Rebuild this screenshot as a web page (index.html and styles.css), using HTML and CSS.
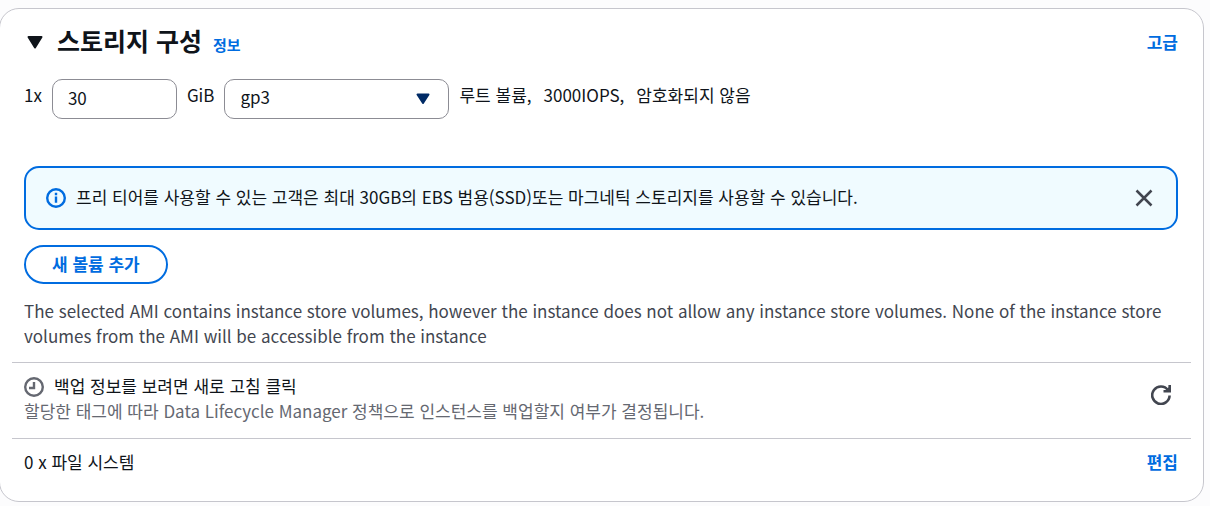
FILE: index.html
```html
<!DOCTYPE html>
<html lang="ko">

<head>
    <meta charset="UTF-8">
    <meta name="viewport" content="width=device-width, initial-scale=1.0">
    <title>스토리지 구성</title>
    <link rel="stylesheet" href="styles.css">
</head>

<body>
    <section class="card">
        <div class="header">
            <button class="toggle" type="button" aria-label="접기">
                <svg width="18" height="16" viewBox="0 0 18 16"><path d="M2.5 4h13L9 14.5z" fill="#0f141a" stroke="#0f141a" stroke-width="2" stroke-linejoin="round"/></svg>
            </button>
            <div class="title">
                <h2>스토리지 구성</h2>
                <a class="info" href="#">정보</a>
            </div>
            <a class="link" href="#">고급</a>
        </div>

        <!-- Root volume -->
        <div class="volume">
            <label for="size">1x</label>
            <input class="field size" id="size" type="text" value="30">
            <label for="type">GiB</label>
            <div class="selectWrap">
                <select class="field" id="type">
                    <option>gp3</option>
                </select>
                <svg class="caret" width="14" height="12" viewBox="0 0 14 12"><path d="M1.5 1.5h11L7 10z" fill="#002b66" stroke="#002b66" stroke-width="2" stroke-linejoin="round"/></svg>
            </div>
            <div class="details"><span>루트 볼륨,</span><span>3000IOPS,</span><span>암호화되지 않음</span></div>
        </div>

        <div class="alert">
            <svg width="20" height="20" viewBox="0 0 20 20" fill="none" stroke="#006ce0" stroke-width="2.4"><circle cx="10" cy="10" r="8.8"/><path d="M10 8.6v6.2M10 4.8v2.4"/></svg>
            <p>프리 티어를 사용할 수 있는 고객은 최대 30GB의 EBS 범용(SSD)또는 마그네틱 스토리지를 사용할 수 있습니다.</p>
            <button class="iconButton" type="button" aria-label="닫기">
                <svg width="18" height="18" viewBox="0 0 18 18" fill="none" stroke="#424650" stroke-width="2.5"><path d="M1.5 1.5l15 15M16.5 1.5l-15 15"/></svg>
            </button>
        </div>

        <button class="addButton" type="button">새 볼륨 추가</button>
        <p class="note">The selected AMI contains instance store volumes, however the instance does not allow any instance store volumes. None of the instance store volumes from the AMI will be accessible from the instance</p>

        <!-- Backup -->
        <div class="row">
            <div>
                <div class="backupTitle">
                    <svg width="20" height="22" viewBox="0 -2 20 22" fill="none" stroke="#656871" stroke-width="2.4"><circle cx="10" cy="10" r="8.8"/><path d="M10 5v6H5"/></svg>
                    <span>백업 정보를 보려면 새로 고침 클릭</span>
                </div>
                <p class="hint">할당한 태그에 따라 Data Lifecycle Manager 정책으로 인스턴스를 백업할지 여부가 결정됩니다.</p>
            </div>
            <button class="iconButton refresh" type="button" aria-label="새로 고침">
                <svg width="20" height="20" viewBox="0 0 20 20" fill="none" stroke="#424650" stroke-width="2.6"><path d="M18.6 10.5A8.7 8.7 0 1 1 17 5.2M12.5 6.2h6.2V0"/><path d="M14.5 5.5h4V1.5z" fill="#424650" stroke="none"/></svg>
            </button>
        </div>

        <div class="row">
            <span>0 x 파일 시스템</span>
            <a class="link" href="#">편집</a>
        </div>
    </section>
</body>

</html>
```

FILE: styles.css
```css
* {
    box-sizing: border-box;
}

body {
    margin: 8px 6px 0 -1px;
    background-color: #fcfcfd;
    color: #0f141a;
    font-family: "Noto Sans CJK KR", sans-serif;
    font-size: 17px;
    line-height: 25px;
}

p,
h2 {
    margin: 0;
}

button {
    padding: 0;
    border: none;
    background: none;
    font: inherit;
    cursor: pointer;
}

svg {
    display: block;
    flex-shrink: 0;
}

a {
    color: #006ce0;
    font-weight: 700;
    text-decoration: none;
}

.card {
    padding: 16px 12px 12px;
    border: 1px solid #c6c6cd;
    border-radius: 20px;
    background-color: #fff;
}

.header {
    display: flex;
    align-items: center;
    padding: 0 13px 0 12px;
}

.toggle {
    margin: 0 13px 0 2px;
}

.title {
    display: flex;
    align-items: baseline;
    gap: 11px;
}

h2 {
    font-size: 25px;
    line-height: 30px;
}

.info {
    font-size: 15px;
}

.link {
    margin-left: auto;
}

.volume {
    display: flex;
    gap: 10px;
    margin: 22px 12px 0;
    line-height: 32px;
}

.field {
    width: 100%;
    height: 40px;
    padding: 0 15px 4px;
    border: 1px solid #8c8c94;
    border-radius: 10px;
    background-color: #fff;
    color: inherit;
    font: inherit;
    appearance: none;
}

.size {
    width: 125px;
}

.selectWrap {
    position: relative;
    width: 225px;
}

.caret {
    position: absolute;
    top: 14px;
    right: 19px;
    pointer-events: none;
}

.details {
    display: flex;
    gap: 12px;
}

.alert {
    display: flex;
    align-items: center;
    gap: 10px;
    min-height: 64px;
    margin: 47px 13px 15px 12px;
    padding: 0 23px 0 20px;
    border: 2px solid #006ce0;
    border-radius: 15px;
    background-color: #f0fbff;
}

.alert p {
    padding-bottom: 3px;
}

.iconButton {
    margin-left: auto;
}

.addButton {
    height: 39px;
    margin-left: 12px;
    padding: 0 26px 3px;
    border: 2px solid #006ce0;
    border-radius: 20px;
    color: #006ce0;
    font-weight: 700;
}

.note {
    margin: 14px 12px;
    color: #424650;
}

.row {
    display: flex;
    align-items: center;
    padding: 10px 13px 15px 12px;
    border-top: 1px solid #c6c6cd;
}

.backupTitle {
    display: flex;
    align-items: center;
    gap: 10px;
}

.refresh {
    align-self: flex-start;
    margin: 12px 7px 0 auto;
}

.hint {
    color: #656871;
}
```
